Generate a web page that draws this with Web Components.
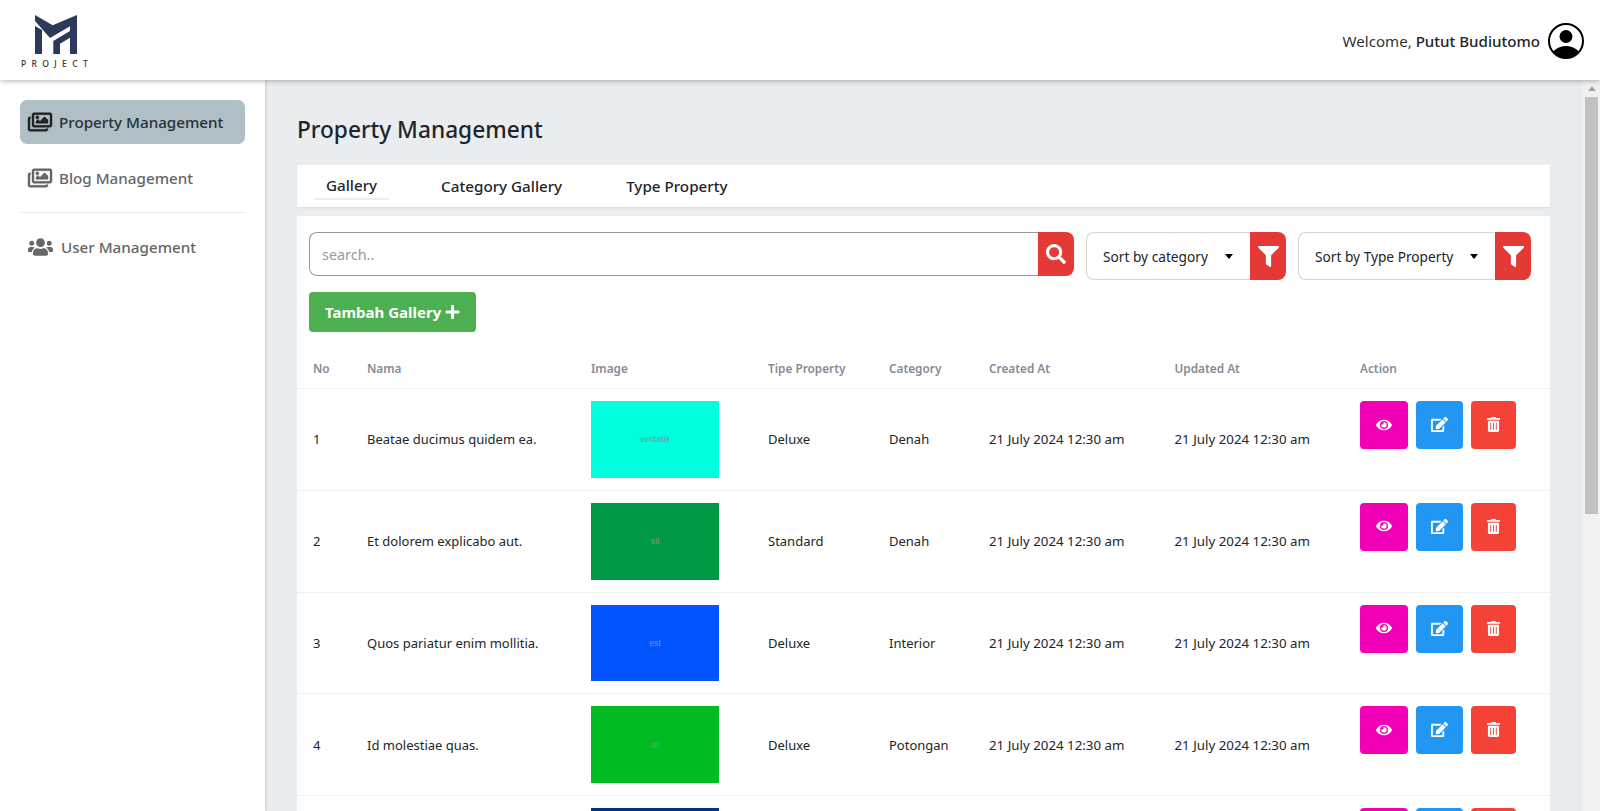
<!DOCTYPE html>
<html lang="en">
<head>
<meta charset="utf-8">
<title>Property Management</title>
<style>
html,body{margin:0;padding:0;height:100%;overflow:hidden;background:#e9edf0;font-family:"Noto Sans","Open Sans",sans-serif;}
</style>
</head>
<body>
<app-shell></app-shell>
<script>
const ICONS={
images:['0 0 576 512','M480 416v16c0 26.51-21.49 48-48 48H48c-26.51 0-48-21.49-48-48V176c0-26.51 21.49-48 48-48h16v48H54a6 6 0 0 0-6 6v244a6 6 0 0 0 6 6h372a6 6 0 0 0 6-6v-10h48zm42-336H150a6 6 0 0 0-6 6v244a6 6 0 0 0 6 6h372a6 6 0 0 0 6-6V86a6 6 0 0 0-6-6zm6-48c26.51 0 48 21.49 48 48v256c0 26.51-21.49 48-48 48H144c-26.51 0-48-21.49-48-48V80c0-26.51 21.49-48 48-48h384zM264 144c0 22.091-17.909 40-40 40s-40-17.909-40-40 17.909-40 40-40 40 17.909 40 40zm-72 96l39.515-39.515c4.686-4.686 12.284-4.686 16.971 0L288 240l103.515-103.515c4.686-4.686 12.284-4.686 16.971 0L480 208v80H192v-48z'],
users:['0 0 640 512','M96 224c35.3 0 64-28.7 64-64s-28.7-64-64-64-64 28.7-64 64 28.7 64 64 64zm448 0c35.3 0 64-28.7 64-64s-28.7-64-64-64-64 28.7-64 64 28.7 64 64 64zm32 32h-64c-17.6 0-33.5 7.1-45.1 18.6 40.3 22.1 68.9 62 75.1 109.4h66c17.7 0 32-14.3 32-32v-32c0-35.3-28.7-64-64-64zm-256 0c61.9 0 112-50.1 112-112S381.9 32 320 32 208 82.1 208 144s50.1 112 112 112zm76.8 32h-8.3c-20.8 10-43.9 16-68.5 16s-47.6-6-68.5-16h-8.3C179.6 288 128 339.6 128 403.2V432c0 26.5 21.5 48 48 48h288c26.5 0 48-21.5 48-48v-28.8c0-63.6-51.6-115.2-115.2-115.2zm-223.7-13.4C161.5 263.1 145.6 256 128 256H64c-35.3 0-64 28.7-64 64v32c0 17.7 14.3 32 32 32h65.9c6.3-47.4 34.9-87.3 75.2-109.4z'],
search:['0 0 512 512','M505 442.7L405.3 343c-4.5-4.5-10.6-7-17-7H372c27.6-35.3 44-79.7 44-128C416 93.1 322.9 0 208 0S0 93.1 0 208s93.1 208 208 208c48.3 0 92.7-16.4 128-44v16.3c0 6.4 2.5 12.5 7 17l99.7 99.7c9.4 9.4 24.6 9.4 33.9 0l28.3-28.3c9.4-9.4 9.4-24.6.1-34zM208 336c-70.7 0-128-57.2-128-128 0-70.7 57.2-128 128-128 70.7 0 128 57.2 128 128 0 70.7-57.2 128-128 128z'],
filter:['0 0 512 512','M487.976 0H24.028C2.71 0-8.047 25.866 7.058 40.971L192 225.941V432c0 7.831 3.821 15.17 10.237 19.662l80 55.98C298.02 518.69 320 507.493 320 487.98V225.941l184.947-184.97C520.021 25.896 509.338 0 487.976 0z'],
plus:['0 0 448 512','M416 208H272V64c0-17.67-14.33-32-32-32h-32c-17.67 0-32 14.33-32 32v144H32c-17.67 0-32 14.33-32 32v32c0 17.67 14.33 32 32 32h144v144c0 17.67 14.33 32 32 32h32c17.67 0 32-14.33 32-32V304h144c17.67 0 32-14.33 32-32v-32c0-17.67-14.33-32-32-32z'],
eye:['0 0 576 512','M572.52 241.4C518.29 135.59 410.93 64 288 64S57.68 135.64 3.48 241.41a32.35 32.35 0 0 0 0 29.19C57.71 376.41 165.07 448 288 448s230.32-71.64 284.52-177.41a32.35 32.35 0 0 0 0-29.19zM288 400a144 144 0 1 1 144-144 143.93 143.93 0 0 1-144 144zm0-240a95.31 95.31 0 0 0-25.31 3.79 47.85 47.85 0 0 1-66.9 66.9A95.78 95.78 0 1 0 288 160z'],
edit:['0 0 576 512','M402.6 83.2l90.2 90.2c3.8 3.8 3.8 10 0 13.8L274.4 405.6l-92.8 10.3c-12.4 1.4-22.9-9.1-21.5-21.5l10.3-92.8L388.8 83.2c3.8-3.8 10-3.8 13.8 0zm162-22.9l-48.8-48.8c-15.2-15.2-39.9-15.2-55.2 0l-35.4 35.4c-3.8 3.8-3.8 10 0 13.8l90.2 90.2c3.8 3.8 10 3.8 13.8 0l35.4-35.4c15.2-15.3 15.2-40 0-55.2zM384 346.2V448H64V128h229.8c3.2 0 6.2-1.3 8.5-3.5l40-40c7.6-7.6 2.2-20.5-8.5-20.5H48C21.5 64 0 85.5 0 112v352c0 26.5 21.5 48 48 48h352c26.5 0 48-21.5 48-48V306.2c0-10.7-12.9-16-20.5-8.5l-40 40c-2.2 2.3-3.5 5.3-3.5 8.5z'],
trash:['0 0 448 512','M32 464a48 48 0 0 0 48 48h288a48 48 0 0 0 48-48V128H32zm272-256a16 16 0 0 1 32 0v224a16 16 0 0 1-32 0zm-96 0a16 16 0 0 1 32 0v224a16 16 0 0 1-32 0zm-96 0a16 16 0 0 1 32 0v224a16 16 0 0 1-32 0zM432 32H312l-9.4-18.7A24 24 0 0 0 281.1 0H166.8a23.72 23.72 0 0 0-21.4 13.3L136 32H16A16 16 0 0 0 0 48v32a16 16 0 0 0 16 16h416a16 16 0 0 0 16-16V48a16 16 0 0 0-16-16z']
};
function define(name,html,extra){
  customElements.define(name,class extends HTMLElement{
    constructor(){super();this.attachShadow({mode:'open'});}
    connectedCallback(){
      this.shadowRoot.innerHTML=typeof html==='function'?html(this):html;
      if(extra)extra(this);
    }
  });
}
const attr=(e,n,d='')=>e.getAttribute(n)??d;

define('app-icon',e=>{
  const [vb,d]=ICONS[attr(e,'name')];
  const w=attr(e,'size','16');
  const s=attr(e,'bold');
  return `<style>:host{display:inline-flex;line-height:0}svg{display:block;fill:currentColor;overflow:visible}</style>
  <svg viewBox="${vb}" width="${w}" height="${attr(e,'h',w)}"><path d="${d}"${s?` stroke="currentColor" stroke-width="${s}"`:''}/></svg>`;
});

define('brand-logo',`<style>
:host{display:flex;flex-direction:column;align-items:center;width:70px;padding-top:3px}
svg{display:block;margin-left:-1px}
span{font:500 8.6px/9px "Noto Sans",sans-serif;letter-spacing:5.3px;color:#333;margin-top:5px;margin-right:-2px}
</style>
<svg width="44" height="40" viewBox="0 0 44 40" fill="#2b3a58">
<path d="M1 0 L18.700 10.300 L43 0 L43 39 L36 39 L36 22.700 L26 28.700 L26 39 L19.300 39 L19.300 26 L36 16 L36 11.300 L16 23 L1 6Z"/>
<path d="M1 11 L8 15 L8 39 L1 39Z"/>
</svg>
<span>PROJECT</span>`);

define('user-avatar',`<style>:host{display:block;width:36px;height:36px}svg{display:block}</style>
<svg width="36" height="36" viewBox="0 0 36 36"><defs><clipPath id="c"><circle cx="18" cy="18" r="17"/></clipPath></defs>
<circle cx="18" cy="18" r="17" fill="#fff" stroke="#000" stroke-width="2"/>
<circle cx="18" cy="13.500" r="6.500" fill="#000"/>
<ellipse cx="18" cy="35" rx="15" ry="12" fill="#000" clip-path="url(#c)"/></svg>`);

define('top-bar',`<style>
:host{display:flex;align-items:center;justify-content:space-between;height:80px;box-sizing:border-box;padding:0 16px 0 21px;background:#fff;box-shadow:0 1px 5px rgba(0,0,0,.3);position:relative;z-index:3}
.user{display:flex;align-items:center;gap:8px;font-size:15.100px;color:#333;padding-top:2px}
b{font-weight:500;color:#212529}
</style>
<brand-logo></brand-logo>
<div class="user"><span>Welcome, <b>Putut Budiutomo</b></span><user-avatar></user-avatar></div>`);

define('nav-item',e=>`<style>
:host{display:flex;align-items:center;height:44px;box-sizing:border-box;padding-left:8px;border-radius:7px;font-size:15.2px;font-weight:500;color:#666;gap:${attr(e,'gap','7')}px}
:host([active]){background:#b0bec5;color:#263238}
:host([active]) app-icon{color:#212121}
</style><app-icon name="${attr(e,'icon')}" size="${attr(e,'icon-size','24')}" h="${attr(e,'icon-h','22')}" bold="${attr(e,'bold')}"></app-icon><slot></slot>`);

define('side-nav',`<style>
:host{display:flex;flex-direction:column;padding:20px 20px 0;background:#fff;box-shadow:1px 0 3px rgba(0,0,0,.15);position:relative;z-index:2}
hr{border:0;border-top:1px solid #e9ecef;margin:12px 0 12px;}
nav-item+nav-item{margin-top:12px}
</style>
<nav-item icon="images" bold="10" active>Property Management</nav-item>
<nav-item icon="images" bold="10">Blog Management</nav-item>
<hr>
<nav-item icon="users" icon-size="25" icon-h="20" gap="8">User Management</nav-item>`);

define('tab-bar',`<style>
:host{display:flex;height:42px;box-sizing:border-box;background:#fff;padding-left:17px;box-shadow:0 1px 2px rgba(0,0,0,.07);font-size:15.200px;font-weight:500;color:#212529}
a{display:block;padding:0 12px;line-height:43px;margin-right:27px;height:34px}
a.on{line-height:41px;height:33px;border-bottom:2px solid #eee;margin-right:40px}
</style>
<a class="on">Gallery</a><a style="margin-right:40px">Category Gallery</a><a>Type Property</a>`);

define('search-box',`<style>
:host{display:flex;flex:none;width:765px;height:44px}
input{flex:1;min-width:0;box-sizing:border-box;border:1px solid #999;border-right:0;border-radius:8px 0 0 8px;padding:0 12px;font:14.400px "Noto Sans",sans-serif;outline:0;color:#333}
input::placeholder{color:#9a9a9a;opacity:1}
button{width:36px;border:0;padding:0;background:#e53935;color:#fff;border-radius:0 8px 8px 0;display:flex;align-items:center;justify-content:center}
</style><input placeholder="search.."><button aria-label="search"><app-icon name="search" size="20"></app-icon></button>`);

define('filter-select',e=>`<style>
:host{display:flex;flex:none;height:48px;font-size:13.7px;color:#212529}
.s{flex:1;display:flex;align-items:center;justify-content:space-between;box-sizing:border-box;border:1px solid #d5d5d5;border-right:0;border-radius:8px 0 0 8px;padding:0 16px 0 16px}
.s i{width:0;height:0;border:4px solid transparent;border-top:5px solid #000;border-bottom:0;margin-right:1px}
button{width:36px;border:0;padding:0;background:#e53935;color:#fff;border-radius:0 8px 8px 0;display:flex;align-items:center;justify-content:center}
</style><div class="s"><span>${attr(e,'label')}</span><i></i></div><button aria-label="filter"><app-icon name="filter" size="21"></app-icon></button>`);

define('action-btn',e=>`<style>
:host{display:flex;align-items:center;justify-content:center;height:48px;width:${attr(e,'w')}px;background:${attr(e,'bg')};color:#fff;border-radius:4px;padding-bottom:1px;box-sizing:border-box}
</style><app-icon name="${attr(e,'icon')}" size="${attr(e,'size','16')}" h="${attr(e,'h',attr(e,'size','16'))}"></app-icon>`);

const GRID='grid-template-columns:54px 224px 177px 121px 100px 185.500px 185.500px 1fr;padding-left:16px;';
define('gallery-head',`<style>
:host{display:grid;${GRID}height:39px;align-items:center;box-sizing:border-box;border-bottom:1px solid #eef0f2;font-size:11.800px;font-weight:600;color:#868b95;padding-bottom:2px}
</style>
<span>No</span><span>Nama</span><span>Image</span><span>Tipe Property</span><span>Category</span><span>Created At</span><span>Updated At</span><span>Action</span>`);

define('gallery-row',e=>{
  const no=attr(e,'no');
  return `<style>
:host{display:grid;${GRID}align-items:center;box-sizing:border-box;padding-top:12px;padding-bottom:12px;height:101.750px;border-bottom:1px solid #eef0f2;font-size:13px;color:#212529}
.img{width:128px;height:76.750px;display:flex;align-items:center;justify-content:center;font:8.500px "Liberation Sans",sans-serif;color:#8a8f8f}
.d{font-size:13.300px}
.acts{display:flex;gap:8px;align-self:start}
</style>
<span>${no}</span><span>${attr(e,'name')}</span>
<div class="img" style="background:${attr(e,'color')}">${attr(e,'word')}</div>
<span>${attr(e,'type')}</span><span>${attr(e,'cat')}</span>
<span class="d">${attr(e,'created')}</span><span class="d">${attr(e,'updated')}</span>
<div class="acts"><action-btn w="48" bg="#f200b9" icon="eye" size="16"></action-btn><action-btn w="47" bg="#2196f3" icon="edit" size="17"></action-btn><action-btn w="45" bg="#f44336" icon="trash" size="13" h="15"></action-btn></div>`;
});

const D='created="21 July 2024 12:30 am" updated="21 July 2024 12:30 am"';
define('gallery-card',`<style>
:host{display:block;background:#fff;margin-top:9px}
.bar{display:flex;gap:12px;padding:16px 0 0 12px}
.add{display:inline-flex;align-items:center;gap:4px;height:40px;width:167px;box-sizing:border-box;margin:12px 0 18px 12px;padding-left:16px;background:#4caf50;color:#fff;border-radius:4px;font-size:15px;font-weight:700}
</style>
<div class="bar"><search-box></search-box>
<filter-select label="Sort by category" style="width:200px"></filter-select>
<filter-select label="Sort by Type Property" style="width:233px"></filter-select></div>
<div class="add"><span>Tambah Gallery</span><app-icon name="plus" size="15" h="16"></app-icon></div>
<gallery-head></gallery-head>
<gallery-row no="1" name="Beatae ducimus quidem ea." color="#00ffdd" word="veritatis" type="Deluxe" cat="Denah" ${D}></gallery-row>
<gallery-row no="2" name="Et dolorem explicabo aut." color="#009944" word="sit" type="Standard" cat="Denah" ${D}></gallery-row>
<gallery-row no="3" name="Quos pariatur enim mollitia." color="#0055ff" word="est" type="Deluxe" cat="Interior" ${D}></gallery-row>
<gallery-row no="4" name="Id molestiae quas." color="#00bb22" word="et" type="Deluxe" cat="Potongan" ${D}></gallery-row>
<gallery-row color="#003388"></gallery-row>`);

define('page-main',`<style>
:host{display:block;overflow:hidden;padding:32px 33px 0 32px;background:#e9edf0;min-width:0}
h1{margin:0 0 17px;font-size:22.700px;line-height:36px;font-weight:500;color:#212529}
</style>
<h1>Property Management</h1><tab-bar></tab-bar><gallery-card></gallery-card>`);

define('fake-scrollbar',`<style>
:host{display:block;background:#f1f1f1;position:relative;z-index:1}
.up{display:block;width:0;height:0;border:4px solid transparent;border-bottom:5px solid #a3a3a3;border-top:0;margin:6px auto 0}
.th{margin:6px 2px 0;height:417px;background:#c1c1c1}
</style><i class="up"></i><div class="th"></div>`);

define('app-shell',`<style>
:host{display:grid;grid-template-columns:265px 1fr 17px;grid-template-rows:80px 1fr;height:100vh;overflow:hidden}
top-bar{grid-column:1/-1}
</style>
<top-bar></top-bar><side-nav></side-nav><page-main></page-main><fake-scrollbar></fake-scrollbar>`);
</script>
</body>
</html>
